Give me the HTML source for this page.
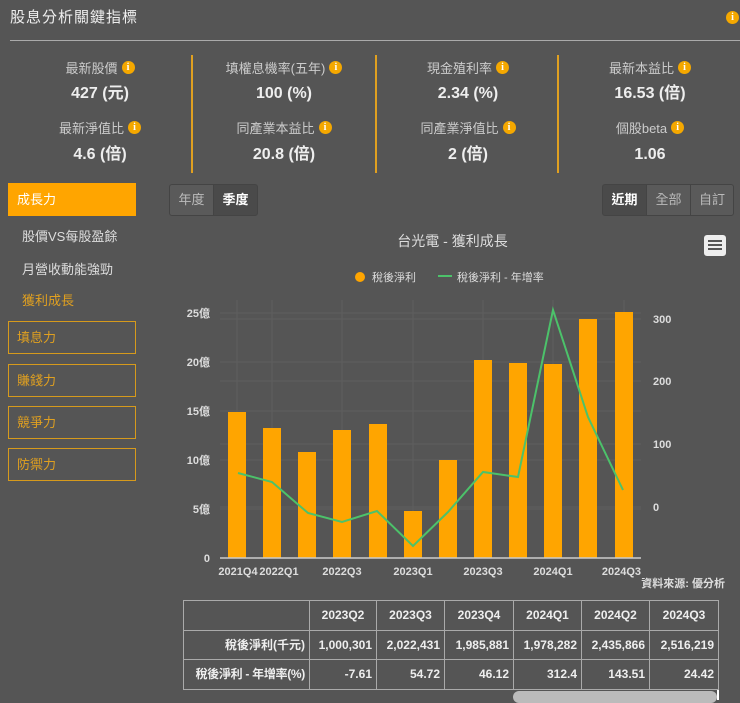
<!DOCTYPE html>
<html><head><meta charset="utf-8"><style>
*{margin:0;padding:0;box-sizing:border-box}
body{width:740px;height:700px;background:#555;font-family:"Liberation Sans","Noto Sans CJK TC",sans-serif;color:#eee;position:relative;overflow:hidden}
.a{position:absolute}
.title{left:10px;top:8px;font-size:15px;color:#eee;letter-spacing:1px;line-height:20px}
.hr{left:10px;top:40px;width:730px;height:1px;background:#aaa}
.ic{display:inline-block;width:13px;height:13px;border-radius:50%;background:#f5a800;color:#fff;font-size:10px;line-height:13px;text-align:center;font-weight:bold;vertical-align:middle;margin-left:4px;font-family:"Liberation Serif",serif;position:relative;top:-2px}
.lb{width:184px;text-align:center;font-size:13px;color:#ccc;height:18px;line-height:18px;white-space:nowrap}
.vl{width:184px;text-align:center;font-size:16px;font-weight:bold;color:#eee;height:20px;line-height:20px;white-space:nowrap}
.sep{width:2px;background:#e0a020;top:55px;height:118px}
.menu{left:8px;width:128px;height:33px;border:1px solid #d69a1c;color:#e0a020;font-size:13px;padding-left:8px;line-height:31px}
.sub{left:22px;font-size:13px;color:#ddd;line-height:18px}
.btn{height:32px;top:184px;border:1px solid #444;background:#5a5a5a;color:#bbb;font-size:13px;text-align:center;line-height:30px}
.sel{background:#4a4a4a;color:#fff;font-weight:bold}
table{position:absolute;left:183px;top:600px;border-collapse:collapse;font-size:12px;color:#eee;font-weight:bold;table-layout:fixed;width:535px}
td{border:1px solid #aaa;height:29.5px;padding:0 4px;text-align:right;white-space:nowrap;overflow:hidden;line-height:16px}
</style></head><body>
<div class="a title">股息分析關鍵指標</div>
<div class="a" style="left:726px;top:9px"><span class="ic" style="margin:0;top:0">i</span></div>
<div class="a hr"></div>

<div class="a lb" style="left:8px;top:60px">最新股價<span class="ic">i</span></div><div class="a vl" style="left:8px;top:84px">427 (元)</div>
<div class="a lb" style="left:192px;top:60px">填權息機率(五年)<span class="ic">i</span></div><div class="a vl" style="left:192px;top:84px">100 (%)</div>
<div class="a lb" style="left:376px;top:60px">現金殖利率<span class="ic">i</span></div><div class="a vl" style="left:376px;top:84px">2.34 (%)</div>
<div class="a lb" style="left:558px;top:60px">最新本益比<span class="ic">i</span></div><div class="a vl" style="left:558px;top:84px">16.53 (倍)</div>
<div class="a lb" style="left:8px;top:120px">最新淨值比<span class="ic">i</span></div><div class="a vl" style="left:8px;top:145px">4.6 (倍)</div>
<div class="a lb" style="left:192px;top:120px">同產業本益比<span class="ic">i</span></div><div class="a vl" style="left:192px;top:145px">20.8 (倍)</div>
<div class="a lb" style="left:376px;top:120px">同產業淨值比<span class="ic">i</span></div><div class="a vl" style="left:376px;top:145px">2 (倍)</div>
<div class="a lb" style="left:558px;top:120px">個股beta<span class="ic">i</span></div><div class="a vl" style="left:558px;top:145px">1.06</div>
<div class="a sep" style="left:191px"></div><div class="a sep" style="left:375px"></div><div class="a sep" style="left:557px"></div>

<div class="a menu" style="top:183px;background:#ffa500;border-color:#ffa500;color:#fff">成長力</div>
<div class="a sub" style="top:228px">股價VS每股盈餘</div>
<div class="a sub" style="top:261px">月營收動能強勁</div>
<div class="a sub" style="top:292px;color:#e0a020">獲利成長</div>
<div class="a menu" style="top:321px">填息力</div>
<div class="a menu" style="top:364px">賺錢力</div>
<div class="a menu" style="top:406px">競爭力</div>
<div class="a menu" style="top:448px">防禦力</div>

<div class="a btn" style="left:169px;width:45px;border-radius:3px 0 0 3px">年度</div>
<div class="a btn sel" style="left:213px;width:45px;border-radius:0 3px 3px 0">季度</div>
<div class="a btn sel" style="left:602px;width:45px;border-radius:3px 0 0 3px">近期</div>
<div class="a btn" style="left:646px;width:45px">全部</div>
<div class="a btn" style="left:690px;width:44px;border-radius:0 3px 3px 0">自訂</div>

<div class="a" style="left:0;top:231px;width:905px;text-align:center;font-size:14px;color:#ddd;line-height:20px">台光電 - 獲利成長</div>
<div class="a" style="left:704px;top:235px;width:22px;height:21px;background:#eee;border-radius:3px"><div style="margin:5px 4px;height:2px;background:#555;box-shadow:0 4px 0 #555,0 8px 0 #555"></div></div>

<svg class="a" style="left:0;top:0" width="740" height="700">
<circle cx="360" cy="277" r="5" fill="#ffa500"/>
<text x="372" y="281" font-size="11" fill="#ddd" font-family="Liberation Sans,Noto Sans CJK TC,sans-serif">稅後淨利</text>
<line x1="438" y1="276" x2="452" y2="276" stroke="#4cc26a" stroke-width="2"/>
<text x="457" y="281" font-size="11" fill="#ddd" font-family="Liberation Sans,Noto Sans CJK TC,sans-serif">稅後淨利 - 年增率</text>
<g stroke="#5f5f5f" stroke-width="1">
<line x1="220" y1="313" x2="641" y2="313"/><line x1="220" y1="362" x2="641" y2="362"/><line x1="220" y1="411" x2="641" y2="411"/><line x1="220" y1="460" x2="641" y2="460"/><line x1="220" y1="509" x2="641" y2="509"/>
<line x1="220" y1="319" x2="641" y2="319"/><line x1="220" y1="381" x2="641" y2="381"/><line x1="220" y1="444" x2="641" y2="444"/><line x1="220" y1="507" x2="641" y2="507"/>
<line x1="237" y1="300" x2="237" y2="558"/><line x1="272" y1="300" x2="272" y2="558"/><line x1="342" y1="300" x2="342" y2="558"/><line x1="413" y1="300" x2="413" y2="558"/><line x1="483" y1="300" x2="483" y2="558"/><line x1="553" y1="300" x2="553" y2="558"/><line x1="624" y1="300" x2="624" y2="558"/>
</g>
<g fill="#ffa500">
<rect x="228" y="412" width="18" height="146"/><rect x="263" y="428" width="18" height="130"/><rect x="298" y="452" width="18" height="106"/><rect x="333" y="430" width="18" height="128"/><rect x="369" y="424" width="18" height="134"/><rect x="404" y="511" width="18" height="47"/><rect x="439" y="460" width="18" height="98"/><rect x="474" y="360" width="18" height="198"/><rect x="509" y="363" width="18" height="195"/><rect x="544" y="364" width="18" height="194"/><rect x="579" y="319" width="18" height="239"/><rect x="615" y="312" width="18" height="246"/>
</g>
<line x1="220" y1="558" x2="641" y2="558" stroke="#ccc" stroke-width="1.5"/>
<polyline fill="none" stroke="#4cc26a" stroke-width="2" points="238,473 272,482 308,513 342,522 377,511 413,546 448,512 483,472 518,477 553,310 588,417 623,490"/>
<g font-size="11" font-weight="bold" fill="#ddd" font-family="Liberation Sans,Noto Sans CJK TC,sans-serif">
<text x="210" y="317" text-anchor="end">25億</text><text x="210" y="366" text-anchor="end">20億</text><text x="210" y="415" text-anchor="end">15億</text><text x="210" y="464" text-anchor="end">10億</text><text x="210" y="513" text-anchor="end">5億</text><text x="210" y="562" text-anchor="end">0</text>
<text x="653" y="323">300</text><text x="653" y="385">200</text><text x="653" y="448">100</text><text x="653" y="511">0</text>
<text x="238" y="575" text-anchor="middle">2021Q4</text><text x="279" y="575" text-anchor="middle">2022Q1</text><text x="342" y="575" text-anchor="middle">2022Q3</text><text x="413" y="575" text-anchor="middle">2023Q1</text><text x="483" y="575" text-anchor="middle">2023Q3</text><text x="553" y="575" text-anchor="middle">2024Q1</text><text x="641" y="575" text-anchor="end">2024Q3</text>
<text x="725" y="587" text-anchor="end">資料來源: 優分析</text>
</g>
</svg>

<table>
<colgroup><col style="width:126px"><col style="width:67px"><col style="width:68px"><col style="width:69px"><col style="width:68px"><col style="width:68px"><col style="width:69px"></colgroup>
<tr><td></td><td style="text-align:center">2023Q2</td><td style="text-align:center">2023Q3</td><td style="text-align:center">2023Q4</td><td style="text-align:center">2024Q1</td><td style="text-align:center">2024Q2</td><td style="text-align:center">2024Q3</td></tr>
<tr><td>稅後淨利(千元)</td><td>1,000,301</td><td>2,022,431</td><td>1,985,881</td><td>1,978,282</td><td>2,435,866</td><td>2,516,219</td></tr>
<tr><td style="letter-spacing:-0.3px">稅後淨利 - 年增率(%)</td><td>-7.61</td><td>54.72</td><td>46.12</td><td>312.4</td><td>143.51</td><td>24.42</td></tr>
</table>
<div class="a" style="left:513px;top:691px;width:204px;height:12px;border-radius:6px;background:#bbb"></div>
<div class="a" style="left:717px;top:690px;width:2px;height:10px;background:#fff"></div>
</body></html>
